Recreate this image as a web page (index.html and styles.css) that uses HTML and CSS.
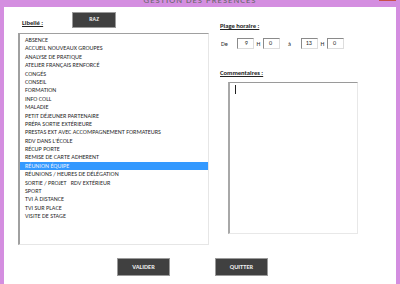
FILE: index.html
```html
<!DOCTYPE html>
<html lang="fr">
<head>
  <meta charset="UTF-8" />
  <title>Gestion des présences</title>
  <link rel="stylesheet" href="styles.css">
</head>
<body>
  <div class="window">
    <div class="titlebar">
      <span class="title">GESTION DES PRÉSENCES</span>
      <span class="close"></span>
    </div>

    <div class="panel">
      <div class="columns">
        <!-- Liste des libellés -->
        <div class="left">
          <div class="left-head">
            <span class="label">Libellé :</span>
            <button class="btn raz">RAZ</button>
          </div>
          <div class="listbox">
            <div class="item">ABSENCE</div>
            <div class="item">ACCUEIL NOUVEAUX GROUPES</div>
            <div class="item">ANALYSE DE PRATIQUE</div>
            <div class="item">ATELIER FRANÇAIS RENFORCÉ</div>
            <div class="item">CONGÉS</div>
            <div class="item">CONSEIL</div>
            <div class="item">FORMATION</div>
            <div class="item">INFO COLL</div>
            <div class="item">MALADIE</div>
            <div class="item">PETIT DÉJEUNER PARTENAIRE</div>
            <div class="item">PRÉPA SORTIE EXTÉRIEURE</div>
            <div class="item">PRESTAS EXT AVEC ACCOMPAGNEMENT FORMATEURS</div>
            <div class="item">RDV DANS L'ÉCOLE</div>
            <div class="item">RÉCUP PORTE</div>
            <div class="item">REMISE DE CARTE ADHERENT</div>
            <div class="item selected">RÉUNION ÉQUIPE</div>
            <div class="item">RÉUNIONS / HEURES DE DÉLÉGATION</div>
            <div class="item">SORTIE / PROJET &nbsp; RDV EXTÉRIEUR</div>
            <div class="item">SPORT</div>
            <div class="item">TVI À DISTANCE</div>
            <div class="item">TVI SUR PLACE</div>
            <div class="item">VISITE DE STAGE</div>
          </div>
        </div>

        <!-- Horaires et commentaires -->
        <div class="right">
          <span class="label">Plage horaire :</span>
          <div class="hours">
            <span class="word">De</span>
            <span class="box num">9</span>
            <span class="unit">H</span>
            <span class="box">0</span>
            <span class="word a">à</span>
            <span class="box num">13</span>
            <span class="unit">H</span>
            <span class="box">0</span>
          </div>
          <span class="label comments-label">Commentaires :</span>
          <div class="textarea"><span class="caret"></span></div>
        </div>
      </div>

      <div class="actions">
        <button class="btn action">VALIDER</button>
        <button class="btn action">QUITTER</button>
      </div>
    </div>
  </div>
</body>
</html>
```

FILE: styles.css
```css
body { margin: 0; font-family: Calibri, 'Open Sans', 'Liberation Sans', sans-serif; color: #333; }

.window {
  width: 400px;
  height: 284px;
  background: #d48ee0;
  padding: 0 4px;
  box-sizing: border-box;
  display: flex;
  flex-direction: column;
  overflow: hidden;
}

.titlebar {
  height: 7px;
  position: relative;
  overflow: hidden;
  text-align: center;
}

.title {
  display: block;
  font-size: 9px;
  line-height: 9px;
  margin-top: -5px;
  color: #666;
  letter-spacing: 1px;
}

.close {
  position: absolute;
  top: 0;
  right: 0;
  width: 17px;
  height: 1px;
  background: #c8504a;
}

.panel {
  flex: 1;
  background: #fff;
  display: flex;
  flex-direction: column;
}

.columns {
  display: flex;
  padding: 5px 0 0 14px;
  gap: 11px;
}

.label {
  font-size: 6.6px;
  font-weight: 700;
  text-decoration: underline;
  color: #222;
}

/* colonne gauche */
.left { width: 191px; }

.left-head {
  display: flex;
  align-items: flex-end;
  height: 16px;
}

.left-head .label { margin-left: 4px; margin-bottom: 1px; }

.btn {
  background: #404040;
  color: #eee;
  border: 1px solid #9a9a9a;
  font-family: inherit;
  font-size: 6.4px;
  font-weight: 700;
  padding: 0;
  cursor: pointer;
}

.raz {
  width: 44px;
  height: 16px;
  margin-left: 29px;
  align-self: flex-start;
  padding-bottom: 3px;
  font-size: 5.8px;
}

.listbox {
  margin-top: 5px;
  height: 212px;
  box-sizing: border-box;
  border-top: 1px solid #a0a0a0;
  border-left: 2px solid #a0a0a0;
  border-right: 1px solid #e6e6e6;
  border-bottom: 1px solid #e6e6e6;
  padding-top: 2px;
}

.item {
  font-size: 6.2px;
  line-height: 8.4px;
  height: 8.4px;
  padding-left: 5px;
  white-space: nowrap;
  color: #2a2a2a;
}

.item.selected {
  background: #3399ff;
  color: #e8f2ff;
}

/* colonne droite */
.right {
  display: flex;
  flex-direction: column;
  align-items: flex-start;
  padding-top: 10px;
}

.hours {
  display: flex;
  align-items: center;
  margin-top: 8px;
  font-size: 6.2px;
  color: #2a2a2a;
}

.word { width: 16px; padding-left: 1px; }
.word.a { width: 13px; padding-left: 8px; }

.box {
  width: 17px;
  height: 11px;
  box-sizing: border-box;
  border-top: 1px solid #8a8a8a;
  border-left: 1px solid #8a8a8a;
  border-right: 1px solid #ddd;
  border-bottom: 1px solid #ddd;
  line-height: 9px;
  padding-left: 5px;
}

.box.num { text-align: right; padding: 0 5px 0 0; }

.unit { width: 9px; text-align: center; }

.comments-label { margin-top: 20px; }

.textarea {
  margin-top: 5px;
  margin-left: 8px;
  width: 130px;
  height: 152px;
  box-sizing: border-box;
  border-top: 1px solid #9a9a9a;
  border-left: 2px solid #a8a8a8;
  border-right: 1px solid #e8e8e8;
  border-bottom: 1px solid #e8e8e8;
  padding: 2px 0 0 5px;
}

.caret {
  display: block;
  width: 1px;
  height: 9px;
  background: #222;
}

/* boutons du bas */
.actions {
  display: flex;
  gap: 45px;
  padding: 13px 0 0 113px;
}

.action {
  width: 53px;
  height: 18px;
}
```
